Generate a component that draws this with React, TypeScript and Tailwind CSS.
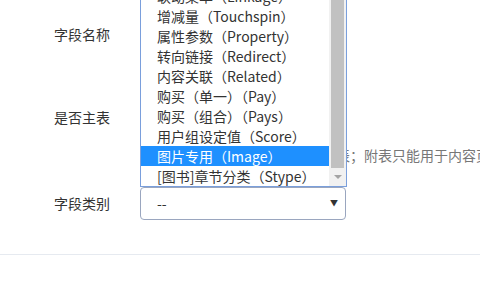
import React from 'react';

const options = [
  '联动菜单（Linkage）',
  '增减量（Touchspin）',
  '属性参数（Property）',
  '转向链接（Redirect）',
  '内容关联（Related）',
  '购买（单一）（Pay）',
  '购买（组合）（Pays）',
  '用户组设定值（Score）',
  '图片专用（Image）',
  '[图书]章节分类（Stype）',
];

const selected = 8;

const FieldForm: React.FC = () => {
  return (
    <div
      className="relative w-[480px] h-[289px] overflow-hidden bg-white text-[14px] text-[#333]"
      style={{ fontFamily: '"Noto Sans CJK SC", "Noto Sans", sans-serif' }}
    >
      <div className="flex flex-col">
        {/* 字段名称 */}
        <div className="flex items-center h-[68px]">
          <label className="w-[140px] shrink-0 pl-[54px] leading-[20px]">字段名称</label>
          <input className="w-[206px] h-[32px] border border-[#c9d0dc] rounded-[3px]" />
        </div>

        {/* 是否主表 */}
        <div className="flex h-[118px]">
          <label className="w-[140px] shrink-0 pl-[54px] pt-[39px] leading-[20px]">是否主表</label>
          <div className="flex flex-col pt-[77px]">
            <p className="text-[#777] leading-[20px] whitespace-nowrap">勾选则字段属于主表，否则为附表；附表只能用于内容页</p>
          </div>
        </div>

        {/* 字段类别 */}
        <div className="flex items-center h-[34px]">
          <label className="w-[140px] shrink-0 pl-[54px] leading-[20px]">字段类别</label>
          <div className="relative w-[206px] h-[33px] border border-[#9aa6bf] rounded-[4px] flex items-center pl-[16px]">
            <span>--</span>
            <span className="absolute right-[7px] top-[10px] text-[8px] leading-[10px] text-[#333]">▼</span>
          </div>
        </div>

        <div className="h-[34px]" />
        <div className="border-t border-[#e6eaf0]" />
      </div>

      {/* open dropdown list */}
      <div className="absolute left-[140px] top-0 w-[207px] h-[187px] border border-t-0 border-[#7a9fdc] bg-white flex overflow-hidden">
        <div className="flex-1 overflow-hidden">
          <ul className="mt-[-14px]">
            {options.map((o, i) => (
              <li
                key={o}
                className={
                  'h-[20px] leading-[20px] pl-[16px] whitespace-nowrap ' +
                  (i === selected ? 'bg-[#1e90ff] text-white' : 'text-[#333]')
                }
              >
                {o}
              </li>
            ))}
          </ul>
        </div>
        <div className="w-[17px] bg-[#f1f1f1] flex flex-col items-center">
          <div className="w-[13px] h-[168px] bg-[#c1c1c1]" />
          <div className="flex-1 flex items-center justify-center">
            <svg width="8" height="5" viewBox="0 0 8 5">
              <path d="M0 0 L8 0 L4 4 Z" fill="#a3a3a3" />
            </svg>
          </div>
        </div>
      </div>
    </div>
  );
};

export default function App() {
  return <FieldForm />;
}
